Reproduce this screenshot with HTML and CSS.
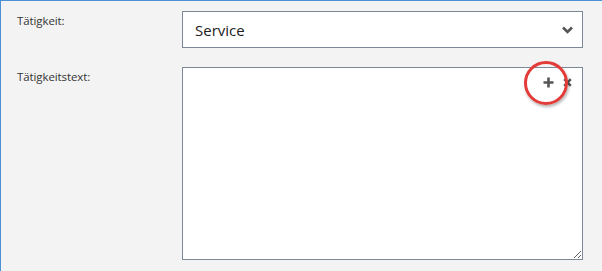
FILE: index.html
```html
<!DOCTYPE html>
<html lang="de">
<head>
  <meta charset="UTF-8">
  <title>Tätigkeit</title>
  <link rel="stylesheet" href="styles.css">
</head>
<body>
  <div class="panel">
    <label class="label" for="taetigkeit">Tätigkeit:</label>
    <div class="field">
      <select id="taetigkeit" class="select">
        <option>Service</option>
      </select>
      <svg class="chevron" width="11" height="8" viewBox="0 0 11 8">
        <path d="M1 1.5 L5.5 6 L10 1.5" fill="none" stroke="#555" stroke-width="2.6"/>
      </svg>
    </div>

    <label class="label" for="text">Tätigkeitstext:</label>
    <div class="field">
      <textarea id="text" class="textarea"></textarea>
      <div class="tools">
        <svg width="11" height="11" viewBox="0 0 11 11">
          <path d="M5.5 0.5 V10.5 M0.5 5.5 H10.5" stroke="#555" stroke-width="2.6"/>
        </svg>
        <svg width="9" height="9" viewBox="0 0 9 9">
          <path d="M1.2 1.2 L7.8 7.8 M7.8 1.2 L1.2 7.8" stroke="#555" stroke-width="2.4"/>
        </svg>
      </div>
      <div class="marker"></div>
    </div>
  </div>
</body>
</html>
```

FILE: styles.css
```css
body {
  margin: 0;
  font-family: "Open Sans", "Noto Sans", sans-serif;
  background: #fff;
}
.panel {
  width: 582px;
  height: 258px;
  padding: 10px 16px 8px 16px;
  background: #f3f3f3;
  border-left: 1px solid #4a90d9;
  border-top: 1px solid #4a90d9;
  border-right: 2px solid #4a90d9;
  border-bottom: 2px solid #4a90d9;
  display: grid;
  grid-template-columns: 165px 401px;
  grid-template-rows: 37px 193px;
  row-gap: 19px;
}
.label {
  font-size: 11.5px;
  color: #333;
  padding-top: 2px;
  letter-spacing: -0.1px;
}
.field {
  position: relative;
}
.select {
  appearance: none;
  -webkit-appearance: none;
  width: 100%;
  height: 37px;
  border: 1px solid #7a8899;
  border-radius: 0;
  background: #fff;
  font-family: inherit;
  font-size: 15px;
  color: #222;
  padding: 0 12px;
  margin: 0;
}
.chevron {
  position: absolute;
  right: 10px;
  top: 15px;
}
.textarea {
  display: block;
  width: 100%;
  height: 193px;
  box-sizing: border-box;
  border: 1px solid #7a8899;
  background: #fff;
  margin: 0;
  resize: vertical;
}
.tools {
  position: absolute;
  top: 10px;
  right: 11px;
  display: flex;
  gap: 9px;
  align-items: center;
}
.marker {
  position: absolute;
  top: -6px;
  right: 15px;
  width: 38px;
  height: 38px;
  border: 3px solid #e23b38;
  border-radius: 50%;
  box-shadow: 1px 2px 3px rgba(0,0,0,0.3);
}
```
